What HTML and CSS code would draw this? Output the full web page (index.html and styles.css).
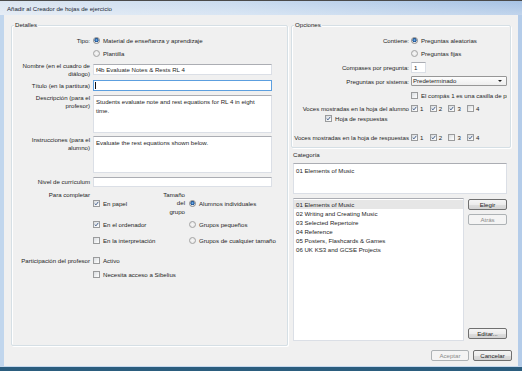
FILE: index.html
```html
<!DOCTYPE html>
<html lang="es">
<head>
<meta charset="utf-8">
<title>Añadir al Creador de hojas de ejercicio</title>
<link rel="stylesheet" href="styles.css">
</head>
<body>
<div class="window">
  <div class="titlebar">Añadir al Creador de hojas de ejercicio</div>
  <div class="frame">
    <div class="main">
      <div class="group details">
        <div class="legend">Detalles</div>
        <div class="form">
          <div class="row h13">
            <div class="lbl lh13">Tipo:</div>
            <div class="opt"><span class="radio on"></span>Material de enseñanza y aprendizaje</div>
          </div>
          <div class="row h13">
            <div></div>
            <div class="opt"><span class="radio"></span>Plantilla</div>
          </div>
          <div class="row r-nombre">
            <div class="lbl two">Nombre (en el cuadro de<br>diálogo)</div>
            <div class="input">f4b Evaluate Notes &amp; Rests RL 4</div>
          </div>
          <div class="row h13">
            <div class="lbl lh13">Título (en la partitura)</div>
            <div class="input focus"><span class="caret"></span></div>
          </div>
          <div class="row r-desc">
            <div class="lbl multi">Descripción (para el<br>profesor)</div>
            <div class="textarea t-desc">Students evaluate note and rest equations for RL 4 in eight<br>time.</div>
          </div>
          <div class="row r-instr">
            <div class="lbl multi">Instrucciones (para el<br>alumno)</div>
            <div class="textarea t-instr">Evaluate the rest equations shown below.</div>
          </div>
          <div class="row r-nivel">
            <div class="lbl nivel">Nivel de currículum</div>
            <div class="input short"></div>
          </div>
          <div class="complete">
            <div class="lbl top">Para completar</div>
            <div class="opt"><span class="cb"><svg viewBox="0 0 7 7" width="5" height="5"><path d="M1 3.6 L2.8 5.4 L6 1.2" fill="none" stroke="#3d5a87" stroke-width="1.3"/></svg></span>En papel</div>
            <div class="size-lbl">Tamaño<br>del<br>grupo</div>
            <div class="opt pl"><span class="radio on"></span>Alumnos individuales</div>
            <div></div>
            <div class="opt"><span class="cb"><svg viewBox="0 0 7 7" width="5" height="5"><path d="M1 3.6 L2.8 5.4 L6 1.2" fill="none" stroke="#3d5a87" stroke-width="1.3"/></svg></span>En el ordenador</div>
            <div></div>
            <div class="opt pl"><span class="radio"></span>Grupos pequeños</div>
            <div></div>
            <div class="opt"><span class="cb"></span>En la interpretación</div>
            <div></div>
            <div class="opt pl"><span class="radio"></span>Grupos de cualquier tamaño</div>
          </div>
          <div class="teacher">
            <div class="lbl">Participación del profesor</div>
            <div class="opt"><span class="cb"></span>Activo</div>
            <div></div>
            <div class="opt"><span class="cb"></span>Necesita acceso a Sibelius</div>
          </div>
        </div>
      </div>
      <div class="rightcol">
        <div class="group options">
          <div class="legend">Opciones</div>
          <div class="oform">
            <div class="orow h13">
              <div class="olbl">Contiene:</div>
              <div class="opt"><span class="radio on"></span>Preguntas aleatorias</div>
            </div>
            <div class="orow h13">
              <div></div>
              <div class="opt"><span class="radio"></span>Preguntas fijas</div>
            </div>
            <div class="orow h14">
              <div class="olbl">Compases por pregunta:</div>
              <div class="input num">1</div>
            </div>
            <div class="orow h14">
              <div class="olbl">Preguntas por sistema:</div>
              <div class="select"><span>Predeterminado</span><span class="arrow"></span></div>
            </div>
            <div class="orow h14">
              <div></div>
              <div class="opt clip"><span class="cb"></span>El compás 1 es una casilla de práctica</div>
            </div>
            <div class="orow h12">
              <div class="olbl">Voces mostradas en la hoja del alumno</div>
              <div class="voices">
                <div class="voice"><span class="cb"><svg viewBox="0 0 7 7" width="5" height="5"><path d="M1 3.6 L2.8 5.4 L6 1.2" fill="none" stroke="#3d5a87" stroke-width="1.3"/></svg></span>1</div>
                <div class="voice"><span class="cb"><svg viewBox="0 0 7 7" width="5" height="5"><path d="M1 3.6 L2.8 5.4 L6 1.2" fill="none" stroke="#3d5a87" stroke-width="1.3"/></svg></span>2</div>
                <div class="voice"><span class="cb"><svg viewBox="0 0 7 7" width="5" height="5"><path d="M1 3.6 L2.8 5.4 L6 1.2" fill="none" stroke="#3d5a87" stroke-width="1.3"/></svg></span>3</div>
                <div class="voice"><span class="cb"></span>4</div>
              </div>
            </div>
            <div class="opt hoja"><span class="cb"><svg viewBox="0 0 7 7" width="5" height="5"><path d="M1 3.6 L2.8 5.4 L6 1.2" fill="none" stroke="#3d5a87" stroke-width="1.3"/></svg></span>Hoja de respuestas</div>
            <div class="orow h14 answers">
              <div class="olbl">Voces mostradas en la hoja de respuestas</div>
              <div class="voices">
                <div class="voice"><span class="cb"><svg viewBox="0 0 7 7" width="5" height="5"><path d="M1 3.6 L2.8 5.4 L6 1.2" fill="none" stroke="#3d5a87" stroke-width="1.3"/></svg></span>1</div>
                <div class="voice"><span class="cb"><svg viewBox="0 0 7 7" width="5" height="5"><path d="M1 3.6 L2.8 5.4 L6 1.2" fill="none" stroke="#3d5a87" stroke-width="1.3"/></svg></span>2</div>
                <div class="voice"><span class="cb"></span>3</div>
                <div class="voice"><span class="cb"><svg viewBox="0 0 7 7" width="5" height="5"><path d="M1 3.6 L2.8 5.4 L6 1.2" fill="none" stroke="#3d5a87" stroke-width="1.3"/></svg></span>4</div>
              </div>
            </div>
          </div>
        </div>
        <div class="category">
          <div class="cat-lbl">Categoría</div>
          <div class="textarea cat-path">01 Elements of Music</div>
          <div class="cat-body">
            <div class="list">
              <div class="item sel">01 Elements of Music</div>
              <div class="item">02 Writing and Creating Music</div>
              <div class="item">03 Selected Repertoire</div>
              <div class="item">04 Reference</div>
              <div class="item">05 Posters, Flashcards &amp; Games</div>
              <div class="item">06 UK KS3 and GCSE Projects</div>
            </div>
            <div class="side">
              <button class="btn">Elegir</button>
              <button class="btn back" disabled>Atrás</button>
              <button class="btn edit">Editar...</button>
            </div>
          </div>
        </div>
      </div>
    </div>
    <div class="footer">
      <button class="btn ok" disabled>Aceptar</button>
      <button class="btn cancel">Cancelar</button>
    </div>
  </div>
</div>
</body>
</html>
```

FILE: styles.css
```css
* { box-sizing: border-box; }
html, body { margin: 0; padding: 0; }
body {
  width: 522px;
  height: 371px;
  overflow: hidden;
  font-family: "Liberation Sans", Arial, sans-serif;
  font-size: 6.1px;
  color: #1e1e1e;
  background: #f0f0f0;
}

.window {
  width: 522px;
  height: 371px;
  display: flex;
  flex-direction: column;
  border-bottom: 4px solid #2b5d7e;
}

.titlebar {
  flex: none;
  height: 15px;
  border-top: 1px solid #4a4a4a;
  padding: 2px 0 0 7px;
  line-height: 12px;
  color: #1c2836;
  white-space: nowrap;
  background:
    linear-gradient(to bottom, rgba(255,255,255,0), rgba(255,255,255,0.3)),
    linear-gradient(to right, #dbe5f1 0%, #c9dbef 45%, #a6c2e4 100%);
}

.frame {
  flex: 1;
  display: flex;
  flex-direction: column;
  background: #f0f0f0;
  border-left: 4px solid #c1d6ed;
  border-right: 4px solid #b4cce9;
  border-bottom: 1px solid #c6d9ee;
}

.main {
  height: 331px;
  flex: none;
  display: flex;
  gap: 3px;
  padding: 10px 7px 0 7px;
}

.group {
  border: 1px solid #d5dfe5;
  border-radius: 2px;
  box-shadow: inset 1px 1px 0 #fff, 1px 1px 0 #fff;
}

.legend {
  width: max-content;
  height: 8px;
  line-height: 8px;
  margin: -5px 0 0 2px;
  padding: 0 1px;
  background: #f0f0f0;
}

.details { width: 277px; }

.form { padding-top: 5px; }

.row {
  display: grid;
  grid-template-columns: 81px 179px;
  align-items: start;
}
.h13 { height: 13px; }
.h14 { height: 14px; }
.h12 { height: 12px; }

.lbl {
  text-align: right;
  padding-right: 3px;
  white-space: nowrap;
}
.lh13 { line-height: 13px; }
.two { padding-top: 1.5px; line-height: 8.5px; }
.multi { padding-top: 2px; line-height: 8px; }
.nivel { padding-top: 4px; line-height: 8px; }

.opt {
  display: flex;
  align-items: center;
  gap: 3px;
  white-space: nowrap;
  height: 100%;
}

.radio {
  flex: none;
  width: 7px;
  height: 7px;
  border-radius: 50%;
  border: 1px solid #a3a3a3;
  background: radial-gradient(circle at 50% 50%, #f7f7f7 0, #e2e2e2 100%);
}
.radio.on {
  border-color: #8a8a8a;
  background: radial-gradient(circle at 50% 42%, #9cc8f0 0, #2f6fb5 1.2px, #1d4f8c 1.9px, #eeeeee 2.3px, #dcdcdc 100%);
}

.cb {
  flex: none;
  width: 7px;
  height: 7px;
  border: 1px solid #9a9b9c;
  background: linear-gradient(135deg, #d9dcdf 0%, #f4f5f6 70%, #ffffff 100%);
  display: flex;
  align-items: center;
  justify-content: center;
}
.cb svg { display: block; }

.input {
  background: #fff;
  border: 1px solid #dbdfe6;
  border-top-color: #abadb3;
  height: 11px;
  padding: 0 2px;
  line-height: 9px;
  white-space: nowrap;
  overflow: hidden;
  display: flex;
  align-items: center;
}
.r-nombre { height: 19px; }
.r-nombre .input { margin-top: 4px; }
.h13 .input.focus { margin-top: 1px; }
.input.focus {
  border-color: #5c9fdf;
  padding-left: 1px;
}
.caret {
  width: 1px;
  height: 7px;
  background: #111;
}

.textarea {
  background: #fff;
  border: 1px solid #dbdfe6;
  border-top-color: #abadb3;
  padding: 1px 2px;
  line-height: 9px;
  white-space: nowrap;
  overflow: hidden;
}
.r-desc { height: 42px; }
.t-desc { margin-top: 3px; height: 38px; }
.r-instr { height: 40px; }
.t-instr { margin-top: 2px; height: 37px; }
.r-nivel { height: 14px; }
.input.short { margin-top: 3px; height: 10px; }

.complete {
  display: grid;
  grid-template-columns: 81px 67px 25px 1fr;
  grid-template-rows: 25px 16px 16px;
  align-items: center;
  padding-top: 3px;
}
.complete .top { align-self: start; line-height: 8px; }
.size-lbl {
  text-align: right;
  line-height: 8.33px;
}
.opt.pl { padding-left: 4px; }

.teacher {
  display: grid;
  grid-template-columns: 81px 1fr;
  grid-template-rows: 14px 14px;
  align-items: center;
  margin-top: 5px;
}

.rightcol {
  width: 220px;
  display: flex;
  flex-direction: column;
}

.options { height: 123px; flex: none; }
.oform { padding: 5px 3px 0 0; }
.orow {
  display: grid;
  grid-template-columns: 117px 96px;
  column-gap: 2px;
  align-items: center;
}
.olbl { text-align: right; white-space: nowrap; }
.input.num { width: 15px; height: 11px; padding-left: 2px; }
.select {
  height: 10px;
  border: 1px solid #979797;
  border-radius: 1px;
  background: linear-gradient(#fdfdfd, #eeeeee);
  display: flex;
  align-items: center;
  justify-content: space-between;
  padding: 0 4px 0 1px;
  line-height: 8px;
}
.arrow {
  width: 0;
  height: 0;
  border-left: 2.5px solid transparent;
  border-right: 2.5px solid transparent;
  border-top: 2.5px solid #1e1e1e;
}
.opt.clip { overflow: hidden; }
.voices { display: flex; height: 100%; align-items: center; }
.voice {
  flex: none;
  width: 18.7px;
  display: flex;
  align-items: center;
  gap: 2px;
}
.hoja { height: 9px; margin-left: 33px; }
.answers { margin-top: 7px; }

.category {
  flex: 1;
  display: flex;
  flex-direction: column;
  padding: 3px 4px 5px 2px;
}
.cat-lbl { line-height: 8px; height: 8px; }
.cat-path {
  margin-top: 4px;
  height: 31px;
  flex: none;
  padding: 3px 2px;
  line-height: 8px;
}
.cat-body {
  flex: 1;
  display: flex;
  margin-top: 4px;
  gap: 4px;
}
.list {
  flex: 1;
  background: #fff;
  border: 1px solid #dbdfe6;
  border-top-color: #abadb3;
  padding: 1px 0 0 0;
}
.item {
  height: 9px;
  line-height: 9px;
  padding-left: 2px;
  white-space: nowrap;
}
.item.sel { background: #e6e6e6; }

.side {
  width: 39px;
  flex: none;
  display: flex;
  flex-direction: column;
  padding: 1px 0 2px 0;
}
.side .back { margin-top: 4px; }
.side .edit { margin-top: auto; }

.btn {
  height: 11px;
  margin: 0;
  padding: 0;
  font-family: inherit;
  font-size: 6.1px;
  line-height: 9px;
  color: #1e1e1e;
  border: 1px solid #707070;
  border-radius: 2px;
  background: linear-gradient(#f5f5f5 0%, #ececec 50%, #dedede 51%, #d3d3d3 100%);
  text-align: center;
}
.btn:disabled {
  color: #8a8a8a;
  border-color: #adb2b5;
  background: #f4f4f4;
}

.footer {
  flex: 1;
  display: flex;
  justify-content: flex-end;
  align-items: flex-start;
  gap: 4px;
  padding: 4px 6px 0 0;
}
.footer .ok { width: 38px; }
.footer .cancel { width: 39px; }
```
